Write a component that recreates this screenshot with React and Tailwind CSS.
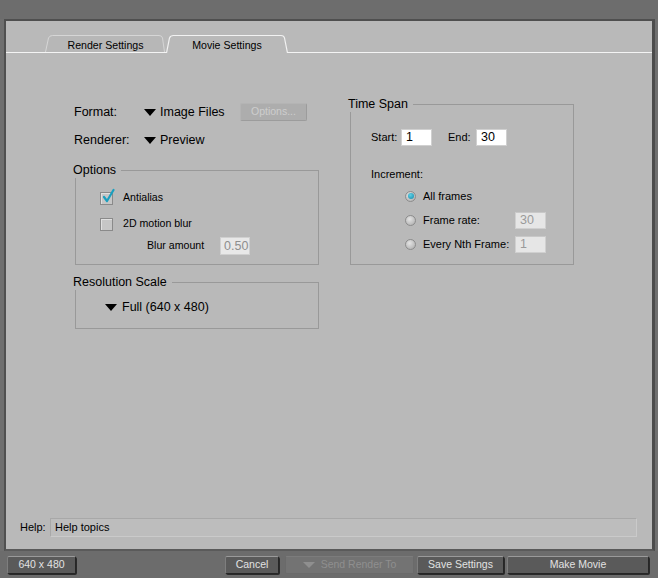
import React from "react";

const Tri = ({ className = "" }) => (
  <span
    className={
      "inline-block w-0 h-0 border-l-[6px] border-r-[6px] border-t-[7px] border-l-transparent border-r-transparent border-t-black " +
      className
    }
  />
);

const Tab = ({ label, active, w }) => (
  <div className={"relative flex items-center justify-center " + (active ? "h-[19px] -mb-px" : "h-[17px]")} style={{ width: w }}>
    <svg className="absolute inset-0 w-full h-full" viewBox={`0 0 ${w} ${active ? 19 : 17}`} preserveAspectRatio="none">
      {active ? (
        <path
          d={`M0.5,19 L3.5,4 Q4.5,1.5 7.5,1.5 L${w - 7},1.5 Q${w - 4},1.5 ${w - 3.5},4 L${w - 0.5},19`}
          fill="#b9b9b9"
          stroke="#f2f2f2"
          strokeWidth="1.2"
        />
      ) : (
        <path
          d={`M0.5,17 L3.5,3 Q4.5,0.5 7.5,0.5 L${w - 7},0.5 Q${w - 4},0.5 ${w - 3.5},3 L${w - 1.5},17`}
          fill="#b7b7b7"
          stroke="#d6d6d6"
          strokeWidth="1"
        />
      )}
    </svg>
    <span className={"relative text-[10.6px] text-black " + (active ? "mt-[5px]" : "mt-[5px]")}>{label}</span>
  </div>
);

const Checkbox = ({ checked }) => (
  <span className="relative inline-block w-[13px] h-[13px] border border-[#8a8a8a] bg-[#c6c6c6] shadow-[inset_1px_1px_0_#e0e0e0]">
    {checked && (
      <svg className="absolute left-[1px] top-[-5px]" width="13" height="15" viewBox="0 0 13 15">
        <path d="M2,9 L5,13 L11.5,2" fill="none" stroke="#1a9fbf" strokeWidth="2.2" strokeLinecap="round" strokeLinejoin="round" />
      </svg>
    )}
  </span>
);

const Radio = ({ on }) => (
  <span className="relative inline-flex items-center justify-center w-[11px] h-[11px] rounded-full border border-[#8c8c8c] bg-[radial-gradient(circle_at_40%_35%,#e4e4e4,#a9a9a9)]">
    {on && <span className="w-[6px] h-[6px] rounded-full bg-[radial-gradient(circle_at_40%_35%,#5fd0e6,#1488a8)]" />}
  </span>
);

const Field = ({ value, w = 31, disabled }) => (
  <div
    className={
      "h-[17px] flex items-center pl-[4px] text-[12.5px] border border-[#d0d0d0] " +
      (disabled ? "bg-[#e6e6e6] text-[#9a9a9a] border-t-[#c8c8c8]" : "bg-white text-black")
    }
    style={{ width: w }}
  >
    {value}
  </div>
);

const DarkBtn = ({ children, w, disabled }) => (
  <div
    className={
      "h-[18px] flex items-center justify-center text-[10.5px] rounded-[2px] border " +
      (disabled
        ? "bg-[#737373] text-[#8f8f8f] border-[#6a6a6a] border-t-[#7c7c7c]"
        : "bg-[#5a5a5a] text-[#e2e2e2] border-[#262626] border-t-[#9a9a9a] border-l-[#7e7e7e] shadow-[1px_1px_0_#2a2a2a]")
    }
    style={{ width: w }}
  >
    {children}
  </div>
);

export default function App() {
  return (
    <div className="w-[658px] h-[578px] bg-[#6f6f6f] flex flex-col font-['Liberation_Sans',Arial,sans-serif] text-black overflow-hidden">
      <div className="h-[19px] shrink-0 bg-[#6d6d6d]" />
      <div className="flex-1 ml-[4px] w-[651px] bg-[#b9b9b9] border-t-2 border-l-2 border-r-[3px] border-b-[2px] border-t-[#4f4f4f] border-l-[#505050] border-r-[#4c4c4c] border-b-[#5a5a5a] flex flex-col">
        {/* tabs */}
        <div className="h-[32px] shrink-0 flex items-end pl-[39px] border-b border-[#f4f4f4]">
          <Tab label="Render Settings" w={121} />
          <Tab label="Movie Settings" w={122} active />
        </div>

        {/* content */}
        <div className="flex pt-[44px] pl-[68px]">
          {/* left column */}
          <div className="w-[244px] pt-[6px] flex flex-col">
            <div className="flex items-center h-[18px] text-[12.5px]">
              <span className="w-[70px]">Format:</span>
              <div className="w-[96px] flex items-center">
                <Tri />
                <span className="ml-[4px]">Image Files</span>
              </div>
              <div className="w-[67px] h-[18px] flex items-center justify-center text-[10.5px] text-[#cdcdcd] bg-[#adadad] border border-[#b4b4b4] border-b-[#9c9c9c] border-r-[#9c9c9c] rounded-[2px]">
                Options...
              </div>
            </div>
            <div className="flex items-center h-[18px] mt-[10px] text-[12.5px]">
              <span className="w-[70px]">Renderer:</span>
              <Tri />
              <span className="ml-[4px]">Preview</span>
            </div>

            <fieldset className="mt-[14px] ml-[1px] w-[244px] border border-[#999999] px-0">
              <legend className="-ml-[3px] pr-[5px] text-[12.5px] leading-[15px]">Options</legend>
              <div className="flex flex-col pt-[12px] pb-[9px]">
                <div className="flex items-center h-[16px] pl-[24px]">
                  <Checkbox checked />
                  <span className="ml-[10px] text-[10.6px]">Antialias</span>
                </div>
                <div className="flex items-center h-[16px] mt-[10px] pl-[24px]">
                  <Checkbox />
                  <span className="ml-[10px] text-[10.6px]">2D motion blur</span>
                </div>
                <div className="flex items-center h-[18px] mt-[5px] pl-[71px]">
                  <span className="w-[73px] text-[10.6px]">Blur amount</span>
                  <div className="w-[30px] h-[18px] flex items-center pl-[3px] bg-[#e8e8e8] text-[#8e8e8e] text-[12.5px] border border-[#d0d0d0]">
                    0.50
                  </div>
                </div>
              </div>
            </fieldset>

            <fieldset className="mt-[10px] ml-[1px] w-[244px] border border-[#999999] px-0">
              <legend className="-ml-[3px] pr-[5px] text-[12.5px] leading-[15px]">Resolution Scale</legend>
              <div className="flex items-center h-[16px] mt-[9px] mb-[13px] pl-[29px] text-[12.5px]">
                <Tri />
                <span className="ml-[5px]">Full (640 x 480)</span>
              </div>
            </fieldset>
          </div>

          {/* right column */}
          <div className="ml-[31px] w-[225px]">
            <fieldset className="ml-[1px] w-[224px] border border-[#999999] px-0">
              <legend className="-ml-[3px] pr-[5px] text-[12.5px] leading-[15px]">Time Span</legend>
              <div className="flex flex-col pt-[17px] pb-[11px] pl-[20px]">
                <div className="flex items-center h-[17px] text-[11px]">
                  <span className="w-[30px]">Start:</span>
                  <Field value="1" />
                  <span className="ml-[16px] w-[28px]">End:</span>
                  <Field value="30" />
                </div>
                <div className="h-[14px] mt-[21px] flex items-center text-[11px]">Increment:</div>
                <div className="flex flex-col pl-[34px] text-[11px]">
                  <div className="flex items-center h-[18px] mt-[6px]">
                    <Radio on />
                    <span className="ml-[7px]">All frames</span>
                  </div>
                  <div className="flex items-center h-[18px] mt-[6px]">
                    <Radio />
                    <span className="ml-[7px] w-[92px]">Frame rate:</span>
                    <Field value="30" disabled />
                  </div>
                  <div className="flex items-center h-[18px] mt-[6px]">
                    <Radio />
                    <span className="ml-[7px] w-[92px]">Every Nth Frame:</span>
                    <Field value="1" disabled />
                  </div>
                </div>
              </div>
            </fieldset>
          </div>
        </div>

        <div className="flex-1" />

        {/* help */}
        <div className="flex items-center pl-[14px] mb-[12px] text-[11px]">
          <span className="w-[30px]">Help:</span>
          <div className="w-[587px] h-[19px] flex items-center pl-[4px] bg-[#bdbdbd] border border-[#a8a8a8] border-b-[#cacaca] border-r-[#cacaca]">
            Help topics
          </div>
        </div>
      </div>

      {/* bottom bar */}
      <div className="h-[27px] shrink-0 flex items-center pl-[7px] pt-[1px] bg-[#6c6c6c]">
        <DarkBtn w={69}>640 x 480</DarkBtn>
        <div className="ml-[149px]">
          <DarkBtn w={54}>Cancel</DarkBtn>
        </div>
        <div className="ml-[6px]">
          <DarkBtn w={129} disabled>
            <span className="inline-block w-0 h-0 border-l-[6px] border-r-[6px] border-t-[6px] border-l-transparent border-r-transparent border-t-[#8f8f8f] mr-[6px]" />
            Send Render To
          </DarkBtn>
        </div>
        <div className="ml-[3px]">
          <DarkBtn w={87}>Save Settings</DarkBtn>
        </div>
        <div className="ml-[3px]">
          <DarkBtn w={142}>Make Movie</DarkBtn>
        </div>
      </div>
    </div>
  );
}
